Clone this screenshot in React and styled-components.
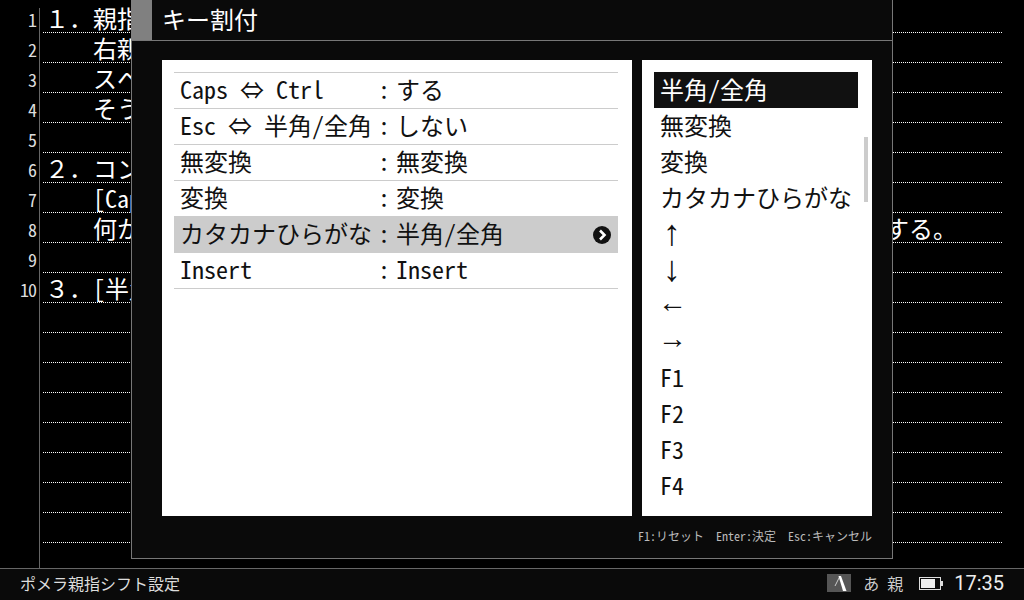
import React from "react";
import styled, { createGlobalStyle } from "styled-components";

const FONT = `"Noto Sans Mono CJK JP", "Noto Sans CJK JP", "DejaVu Sans Mono", monospace`;

const GlobalStyle = createGlobalStyle`
  html, body {
    margin: 0;
    height: 100%;
    background: #000;
    overflow: hidden;
  }
  body {
    font-family: ${FONT};
  }
`;

const Screen = styled.div`
  position: relative;
  width: 1024px;
  height: 600px;
  display: flex;
  flex-direction: column;
  background: #000;
  color: #fff;
`;

const Editor = styled.div`
  flex: 1;
  min-height: 0;
  display: flex;
  overflow: hidden;
`;

const Gutter = styled.div`
  width: 39px;
  margin-top: 8px;
  flex: none;
  border-right: 1px solid #666;
  box-sizing: content-box;
`;

const LineNo = styled.div`
  height: 30px;
  line-height: 26px;
  margin-top: ${(p) => (p.$first ? "-2px" : "0")};
  padding-right: 3px;
  font-size: 18px;
  letter-spacing: -1px;
  text-align: right;
  color: #ddd;
`;

const Lines = styled.div`
  flex: none;
  width: 959px;
  margin-left: 3px;
  padding-top: 3px;
`;

const Line = styled.div`
  box-sizing: border-box;
  height: 30px;
  padding-left: 2px;
  background: repeating-linear-gradient(to right, #fff 0 1px, transparent 1px 2px) left bottom / 100% 1px no-repeat;
  font-size: 24px;
  line-height: 29px;
  white-space: pre;
`;

const Dialog = styled.section`
  position: absolute;
  left: 131px;
  top: -1px;
  box-sizing: border-box;
  width: 762px;
  height: 560px;
  background: #0a0a0a;
  border: 1px solid #777;
  display: flex;
  flex-direction: column;
`;

const DialogHeader = styled.header`
  flex: none;
  height: 41px;
  display: flex;
  border-bottom: 1px solid #777;
  box-sizing: border-box;
`;

const HeaderTab = styled.div`
  width: 21px;
  margin-left: -1px;
  background: #808080;
`;

const DialogTitle = styled.h1`
  margin: 0;
  padding-left: 10px;
  font-size: 24px;
  font-weight: 400;
  line-height: 38px;
  color: #fff;
`;

const DialogBody = styled.div`
  display: flex;
  gap: 10px;
  margin: 19px 20px 0 30px;
  height: 456px;
`;

const Panel = styled.div`
  position: relative;
  box-sizing: border-box;
  width: ${(p) => p.$width}px;
  padding: 12px 14px 12px 12px;
  background: #fff;
  color: #111;
`;

const SettingRow = styled.div`
  box-sizing: border-box;
  height: ${(p) => (p.$first ? 37 : 36)}px;
  display: flex;
  align-items: flex-start;
  padding-left: 6px;
  font-size: 24px;
  line-height: 32px;
  white-space: pre;
  border-top: ${(p) => (p.$first ? "1px solid #ccc" : "none")};
  border-bottom: 1px solid #ccc;
  background: ${(p) => (p.$active ? "#ccc" : "transparent")};
`;

const SettingKey = styled.span`
  width: 198px;
  flex: none;
`;

const SettingSep = styled.span`
  width: 18px;
  flex: none;
`;

const SettingValue = styled.span`
  flex: 1;
`;

const Chevron = styled.svg`
  width: 18px;
  height: 18px;
  margin: 9px 7px 0 0;
  flex: none;
`;

const Choice = styled.div`
  box-sizing: border-box;
  width: 204px;
  height: 36px;
  padding-left: 6px;
  font-size: 24px;
  line-height: 34px;
  white-space: pre;
  background: ${(p) => (p.$active ? "#111" : "transparent")};
  color: ${(p) => (p.$active ? "#fff" : "#111")};
`;

const ArrowChoice = styled(Choice)`
  padding-left: ${(p) => (p.$vertical ? 9 : 4)}px;
  font-family: "Liberation Sans", sans-serif;
  font-size: ${(p) => (p.$vertical ? 36 : 29)}px;
  line-height: ${(p) => (p.$vertical ? 34 : 28)}px;
`;

const ScrollThumb = styled.div`
  position: absolute;
  right: 4px;
  top: 77px;
  width: 4px;
  height: 65px;
  background: #ccc;
`;

const Hints = styled.footer`
  display: flex;
  justify-content: flex-end;
  gap: 12px;
  margin: 12px 20px 0 0;
  font-size: 12px;
  line-height: 16px;
  color: #bbb;
  white-space: pre;
`;

const StatusBar = styled.footer`
  flex: none;
  box-sizing: border-box;
  height: 32px;
  display: flex;
  align-items: center;
  padding: 0 20px 3px;
  border-top: 1px solid #666;
  background: #0a0a0a;
`;

const AppName = styled.span`
  flex: 1;
  font-size: 16px;
  color: #ddd;
`;

const ModeBadge = styled.svg`
  width: 24px;
  height: 18px;
  margin-right: 12px;
`;

const ModeText = styled.span`
  font-size: 16px;
  width: ${(p) => p.$width}px;
  color: #ccc;
`;

const Battery = styled.svg`
  width: 24px;
  height: 13px;
  margin: 0 11px 0 8px;
`;

const Clock = styled.span`
  font-family: Roboto, sans-serif;
  font-size: 20px;
  color: #eee;
`;

const editorLines = [
  "１．親指シフトの設定を行います。",
  "　　右親指シフトキーを設定します。",
  "　　スペースキーを親指シフトにします。",
  "　　そうすると便利になります。",
  "",
  "２．コンパクトなキーボード用の設定です。",
  "　　[Caps Lock]キーと[Ctrl]キーを入れ替えます。",
  "　　何かのキーに別の機能を割り当てて、快適に長い文章を入力できるようにする。",
  "",
  "３．[半角/全角]キーを入れ替えます。",
  "", "", "", "", "", "", "", "",
];

const settings = [
  ["Caps ⇔ Ctrl", "する"],
  ["Esc ⇔ 半角/全角", "しない"],
  ["無変換", "無変換"],
  ["変換", "変換"],
  ["カタカナひらがな", "半角/全角", true],
  ["Insert", "Insert"],
];

const topChoices = ["半角/全角", "無変換", "変換", "カタカナひらがな"];
const arrowChoices = [["↑", true], ["↓", true], ["←", false], ["→", false]];
const fnChoices = ["F1", "F2", "F3", "F4"];

export default function App() {
  return (
    <Screen>
      <GlobalStyle />
      <Editor>
        <Gutter>
          {editorLines.slice(0, 10).map((_, i) => (
            <LineNo key={i} $first={i === 0}>{i + 1}</LineNo>
          ))}
        </Gutter>
        <Lines>
          {editorLines.map((text, i) => (
            <Line key={i}>{text}</Line>
          ))}
        </Lines>
      </Editor>

      <Dialog>
        <DialogHeader>
          <HeaderTab />
          <DialogTitle>キー割付</DialogTitle>
        </DialogHeader>
        <DialogBody>
          <Panel $width={470}>
            {settings.map(([key, value, active], i) => (
              <SettingRow key={key} $first={i === 0} $active={active}>
                <SettingKey>{key}</SettingKey>
                <SettingSep>:</SettingSep>
                <SettingValue>{value}</SettingValue>
                {active && (
                  <Chevron viewBox="0 0 18 18">
                    <circle cx="9" cy="9" r="9" fill="#111" />
                    <path d="M7 4.5 L11.5 9 L7 13.5" fill="none" stroke="#fff" strokeWidth="2.6" />
                  </Chevron>
                )}
              </SettingRow>
            ))}
          </Panel>
          <Panel $width={230}>
            {topChoices.map((c, i) => (
              <Choice key={c} $active={i === 0}>{c}</Choice>
            ))}
            {arrowChoices.map(([c, vertical]) => (
              <ArrowChoice key={c} $vertical={vertical}>{c}</ArrowChoice>
            ))}
            {fnChoices.map((c) => (
              <Choice key={c}>{c}</Choice>
            ))}
            <ScrollThumb />
          </Panel>
        </DialogBody>
        <Hints>
          <span>F1:リセット</span>
          <span>Enter:決定</span>
          <span>Esc:キャンセル</span>
        </Hints>
      </Dialog>

      <StatusBar>
        <AppName>ポメラ親指シフト設定</AppName>
        <ModeBadge viewBox="0 0 24 18">
          <rect width="24" height="18" fill="#555" />
          <path d="M12.5 3 L8 12" stroke="#ccc" strokeWidth="1" fill="none" />
          <path d="M11.5 2 L14 2 L19.5 17 L16 17 Z" fill="#fff" />
        </ModeBadge>
        <ModeText $width={24}>あ</ModeText>
        <ModeText $width={24}>親</ModeText>
        <Battery viewBox="0 0 24 13">
          <rect x="0.5" y="0.5" width="21" height="12" fill="none" stroke="#ddd" />
          <rect x="2" y="2" width="14" height="9" fill="#eee" />
          <rect x="22" y="4" width="2" height="5" fill="#ddd" />
        </Battery>
        <Clock>17:35</Clock>
      </StatusBar>
    </Screen>
  );
}
